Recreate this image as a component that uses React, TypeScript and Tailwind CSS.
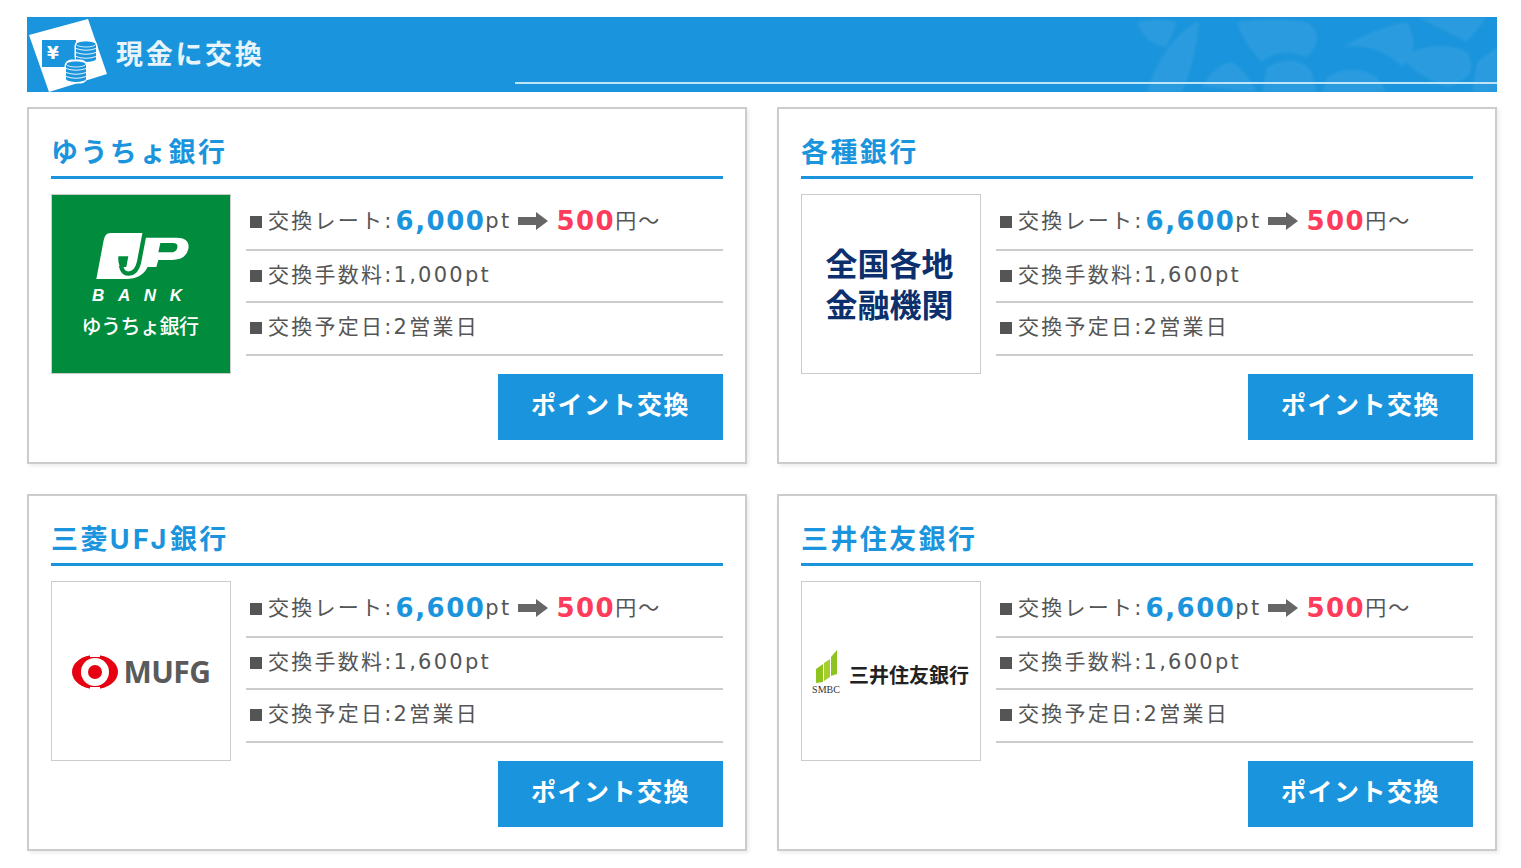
import type { ReactNode } from "react";

const sans = "[font-family:'DejaVu_Sans','Noto_Sans_CJK_JP',sans-serif]";

const JpLogo = () => (
  <div className="flex h-full w-full flex-col items-center bg-[#008c3c] pr-[2px] pt-[28px] text-white">
    <svg width="105" height="60" viewBox="0 0 315 180" className="ml-[2px]">
      {/* J block + P, the green strokes cut the J out of it */}
      <path d="M64 30H166L160 44H262Q304 44 298 78Q291 110 248 111H208L202 132H176Q158 168 112 168H22L44 52Q48 30 64 30Z" fill="#fff" />
      <path d="M214 60H252Q268 60 265 74Q262 88 244 88H208Z" fill="#008c3c" />
      <path d="M88 100H118L112 132H94Q86 120 88 100Z" fill="#008c3c" />
      <path d="M96 128Q100 152 118 152Q142 152 150 118L168 24" fill="none" stroke="#008c3c" strokeWidth="13" />
    </svg>
    <div className="mr-[6px] mt-[4px] flex w-[90px] justify-between text-[17px] font-bold italic leading-[18px] [font-family:'Liberation_Sans',sans-serif]">
      <span>B</span>
      <span>A</span>
      <span>N</span>
      <span>K</span>
    </div>
    <div className="mt-[8px] text-[20px] font-medium leading-[26px] tracking-[-0.5px] [font-family:'Noto_Sans_CJK_JP',sans-serif]">ゆうちょ銀行</div>
  </div>
);

const ZenkokuLogo = () => (
  <div className="flex h-full w-full items-center justify-center pb-[2px] pr-[3px]">
    <div className="text-[32px] font-bold leading-[41px] text-[#0c2f6e] [font-family:'Noto_Sans_CJK_JP',sans-serif]">
      全国各地
      <br />
      金融機関
    </div>
  </div>
);

const MufgLogo = () => (
  <div className="flex h-full w-full items-center justify-center gap-[6px] pt-[1px]">
    <svg width="46" height="34" viewBox="0 0 46 34">
      <ellipse cx="23" cy="17" rx="23" ry="17" fill="#e60012" />
      <circle cx="23" cy="17" r="14" fill="#fff" />
      <rect x="18" y="0" width="10" height="2" fill="#fff" />
      <rect x="18" y="32" width="10" height="2" fill="#fff" />
      <circle cx="23" cy="17" r="7" fill="#e60012" />
    </svg>
    <span className="text-[30px] font-bold leading-none tracking-[-0.6px] text-[#5a5a5a] [font-family:'Open_Sans',sans-serif]">MUFG</span>
  </div>
);

const SmbcLogo = () => (
  <div className="flex h-full w-full items-center justify-center gap-[9px] pr-[1px] pt-[3px]">
    <div className="flex flex-col items-center">
      <svg width="26" height="34" viewBox="0 0 26 34">
        <path d="M3 19L10 14V32L3 33Z" fill="#8fc31f" />
        <path d="M11 13L17 9V27L11 31Z" fill="#a5cf2c" />
        <path d="M18 7L24 0V24L18 26Z" fill="#8fc31f" />
      </svg>
      <span className="text-[10px] leading-[11px] text-[#333] [font-family:'Liberation_Serif',serif]">SMBC</span>
    </div>
    <span className="mt-[5px] text-[20px] font-bold leading-none text-[#222] [font-family:'Noto_Sans_CJK_JP',sans-serif]">三井住友銀行</span>
  </div>
);

const banks: { id: string; name: ReactNode; logo: ReactNode; rate: string; fee: string }[] = [
  { id: "yucho", name: "ゆうちょ銀行", logo: <JpLogo />, rate: "6,000", fee: "1,000pt" },
  { id: "kakushu", name: "各種銀行", logo: <ZenkokuLogo />, rate: "6,600", fee: "1,600pt" },
  {
    id: "mufg",
    name: (
      <>
        三菱<span className="tracking-[3.5px]">UFJ</span>銀行
      </>
    ),
    logo: <MufgLogo />,
    rate: "6,600",
    fee: "1,600pt",
  },
  { id: "smbc", name: "三井住友銀行", logo: <SmbcLogo />, rate: "6,600", fee: "1,600pt" },
];

const Coins = ({ x, y }: { x: number; y: number }) => (
  <g transform={`translate(${x} ${y})`}>
    <rect x="-1.5" y="-1.5" width="23" height="24" rx="7" fill="#fff" />
    <rect x="0" y="3" width="20" height="15" fill="#1a94dc" />
    <ellipse cx="10" cy="18" rx="10" ry="3" fill="#1a94dc" />
    <ellipse cx="10" cy="3" rx="10" ry="3" fill="#1a94dc" stroke="#fff" strokeWidth="0.8" />
    <path d="M0 7.5Q10 11 20 7.5M0 11.5Q10 15 20 11.5M0 15.5Q10 19 20 15.5" fill="none" stroke="#fff" strokeWidth="0.9" />
  </g>
);

const HeaderIcon = () => (
  <svg width="80" height="76" viewBox="0 0 80 76" className="shrink-0">
    <path d="M2 18L61 2L80 57L22 75Z" fill="#fff" />
    <rect x="15" y="23" width="34" height="27" fill="#1a94dc" />
    <text x="20" y="42" fill="#fff" fontSize="17" fontWeight="700" fontFamily="'DejaVu Sans', sans-serif">¥</text>
    <Coins x={49} y={24} />
    <Coins x={39} y={44} />
  </svg>
);

const HeaderTexture = () => (
  <svg className="absolute right-0 top-0 h-full w-[360px]" viewBox="0 0 360 75" aria-hidden="true">
    <defs>
      <filter id="soft">
        <feGaussianBlur stdDeviation="1.8" />
      </filter>
    </defs>
    <g fill="#fff" opacity="0.07" filter="url(#soft)">
      <path d="M10 75Q20 40 45 15L62 3Q60 40 45 75Z" />
      <path d="M0 5Q20 0 40 5L30 30Q10 30 0 5Z" />
      <path d="M65 70Q80 45 95 45Q110 55 120 75Z" />
      <path d="M100 5Q140 0 170 5Q190 20 170 40Q140 30 125 45Q105 25 100 5Z" />
      <path d="M130 50Q160 35 175 55L180 75H125Z" />
      <path d="M190 60Q215 45 240 60L250 75H185Z" />
      <path d="M205 30Q240 10 270 5Q285 30 265 50Q240 25 205 30Z" />
      <path d="M265 40Q300 20 330 35Q345 60 310 70Q280 60 265 40Z" />
      <path d="M280 0H350L330 25Q300 10 280 0Z" />
      <path d="M340 45L360 30V75H335Z" />
    </g>
  </svg>
);

const Mark = () => <span className="ml-[1px] mr-[6px] h-[12px] w-[12px] shrink-0 self-center bg-[#555]" />;

const BankCard = ({ name, logo, rate, fee }: (typeof banks)[number]) => (
  <section className="h-[357px] border-2 border-[#ccc] bg-white px-[22px] pt-[24px] shadow-[2px_2px_4px_rgba(0,0,0,0.08)]">
    <h2 className="h-[46px] border-b-[3px] border-[#1a94dc] text-[27px] font-bold leading-[40px] tracking-[2.4px] text-[#1a94dc] [font-family:'Inter','Noto_Sans_CJK_JP',sans-serif]">{name}</h2>
    <div className="mt-[15px] flex gap-[15px]">
      <div className="h-[180px] w-[180px] shrink-0 overflow-hidden border border-[#ccc]">{logo}</div>
      <div className="flex-1 text-[21px] tracking-[2.25px] text-[#555]">
        <div className="flex h-[57px] items-center whitespace-nowrap border-b-2 border-[#ccc] pl-[3px]">
          <div className="flex items-baseline">
            <Mark />
            <span>交換レート:</span>
            <span className="ml-[2px] translate-y-[2px] text-[26px] font-bold leading-none tracking-[1.5px] text-[#1a94dc]">{rate}</span>
            <span>pt</span>
            <svg width="30" height="18" viewBox="0 0 30 18" className="ml-[7px] mr-[8px] shrink-0 -translate-y-[1px] self-center">
              <path d="M0 5H18V0L30 9L18 18V13H0Z" fill="#666" />
            </svg>
            <span className="translate-y-[2px] text-[26px] font-bold leading-none tracking-[1.5px] text-[#ff3b5c]">500</span>
            <span className="tracking-[2px]">円～</span>
          </div>
        </div>
        <div className="flex h-[52px] items-center whitespace-nowrap border-b-2 border-[#ccc] pl-[3px]">
          <Mark />
          <span>交換手数料:{fee}</span>
        </div>
        <div className="flex h-[53px] items-center whitespace-nowrap border-b-2 border-[#ccc] pb-[1px] pl-[3px]">
          <Mark />
          <span>交換予定日:2営業日</span>
        </div>
        <div className="mt-[18px] flex justify-end">
          <button className="h-[66px] w-[225px] bg-[#1a94dc] pb-[2px] text-[25px] font-bold tracking-[1.5px] text-white">ポイント交換</button>
        </div>
      </div>
    </div>
  </section>
);

export default function App() {
  return (
    <div className={`min-h-[868px] bg-white pb-[17px] pl-[27px] pr-[24px] pt-[17px] ${sans}`}>
      <header className="relative flex h-[75px] items-center gap-[9px] overflow-hidden bg-[#1a94dc]">
        <HeaderIcon />
        <h1 className="pt-[1px] text-[27px] font-bold tracking-[2.7px] text-white/90">現金に交換</h1>
        <HeaderTexture />
        <div className="absolute bottom-[8px] left-[488px] right-0 h-[2px] bg-[#bfe3f7]" />
      </header>
      <main className="mt-[15px] grid grid-cols-2 gap-x-[30px] gap-y-[30px]">
        {banks.map((b) => (
          <BankCard key={b.id} {...b} />
        ))}
      </main>
    </div>
  );
}
